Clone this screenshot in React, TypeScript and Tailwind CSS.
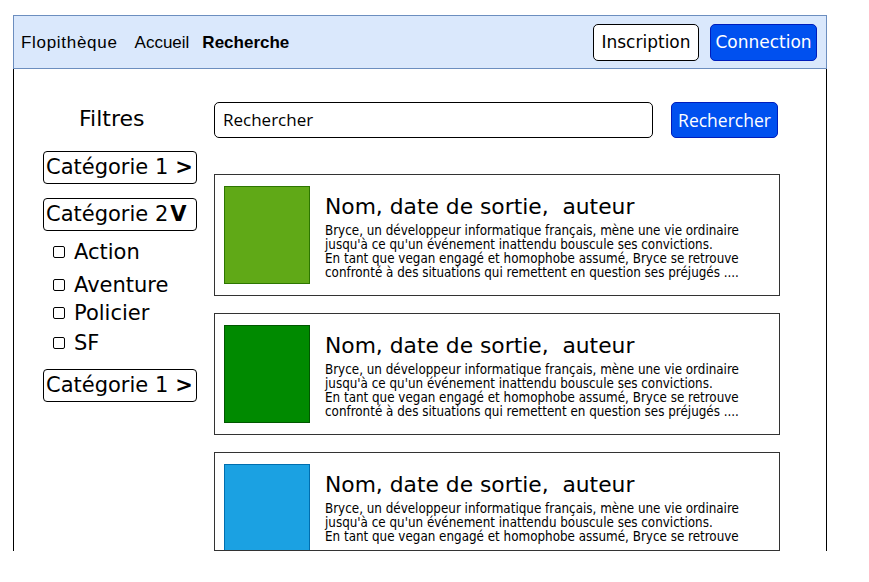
const desc = [
  "Bryce, un développeur informatique français, mène une vie ordinaire",
  "jusqu'à ce qu'un événement inattendu bouscule ses convictions.",
  "En tant que vegan engagé et homophobe assumé, Bryce se retrouve",
  "confronté à des situations qui remettent en question ses préjugés ....",
];

const books = [
  { color: "bg-[#60a917] border-[#2d7600]", h: "h-[122px]", lines: 4 },
  { color: "bg-[#008a00] border-[#005700]", h: "h-[122px]", lines: 4 },
  { color: "bg-[#1ba1e2] border-[#006eaf]", h: "h-[99px]", lines: 3 },
];

function CategoryButton({ label, open }: { label: string; open?: boolean }) {
  return (
    <div className="flex h-[33px] w-[154px] items-center rounded-[4px] border border-black bg-white pl-[2px] text-[21px] leading-none text-black">
      <span>{label}</span>
      <span className={open ? "ml-[2px] font-bold" : "ml-[7px] font-bold"}>{open ? "V" : ">"}</span>
    </div>
  );
}

function Check({ label, className }: { label: string; className?: string }) {
  return (
    <div className={"flex items-center pl-[10px] text-[21px] leading-none " + (className ?? "")}>
      <span className="mr-[9px] h-[12px] w-[12px] rounded-[2px] border border-black bg-white" />
      <span>{label}</span>
    </div>
  );
}

function BookCard({ color, h, lines }: { color: string; h: string; lines: number }) {
  return (
    <div className={"flex w-[566px] shrink-0 overflow-hidden border border-[#333] bg-white pl-[9px] pt-[11px] " + h}>
      <div className={"h-[98px] w-[86px] shrink-0 border " + color} />
      <div className="ml-[15px] pt-[9px]">
        <p className="whitespace-pre text-[21.8px] leading-[24px] text-black">{"Nom, date de sortie,  auteur"}</p>
        <div className="mt-[5px] font-['DejaVu_Sans_Condensed','DejaVu_Sans',sans-serif] text-[13.3px] leading-[14px] text-black">
          {desc.slice(0, lines).map((d) => (
            <p key={d} className="whitespace-nowrap">{d}</p>
          ))}
        </div>
      </div>
    </div>
  );
}

export default function App() {
  return (
    <div className="h-[582px] w-[869px] overflow-hidden bg-white font-['DejaVu_Sans',sans-serif]">
      <div className="ml-[13px] mt-[15px] flex h-[536px] w-[814px] flex-col overflow-hidden">
        <header className="flex h-[54px] shrink-0 items-center border border-[#6c8ebf] bg-[#dae8fc] pl-[7px] pr-[9px]">
          <nav className="flex items-center pt-[2px] font-['Liberation_Sans',Arial,sans-serif] text-[17px] text-black">
            <span className="tracking-[0.7px]">Flopithèque</span>
            <span className="ml-[17px]">Accueil</span>
            <span className="ml-[13px] font-bold">Recherche</span>
          </nav>
          <div className="ml-auto flex items-center gap-[11px] pt-[1px]">
            <button className="h-[37px] w-[106px] rounded-[5px] border border-black bg-white text-[17px] text-black">
              Inscription
            </button>
            <button className="h-[37px] w-[107px] rounded-[5px] border border-[#001dbc] bg-[#0050ef] text-[17px] text-white">
              Connection
            </button>
          </div>
        </header>
        <main className="flex flex-1 border-x border-b border-x-black border-b-[#333] pl-[29px] pt-[33px]">
          <aside className="flex w-[154px] shrink-0 flex-col">
            <p className="pl-[36px] pt-[5px] text-[22px] leading-[24px] text-black">Filtres</p>
            <div className="mt-[20px] flex flex-col gap-[14px]">
              <CategoryButton label="Catégorie 1" />
              <CategoryButton label="Catégorie 2" open />
            </div>
            <Check label="Action" className="mt-[10px] h-[22px]" />
            <Check label="Aventure" className="mt-[11px] h-[22px]" />
            <Check label="Policier" className="mt-[6px] h-[22px]" />
            <Check label="SF" className="mt-[8px] h-[22px]" />
            <div className="mt-[15px]">
              <CategoryButton label="Catégorie 1" />
            </div>
          </aside>
          <section className="ml-[17px] flex flex-col">
            <div className="flex items-center gap-[18px]">
              <div className="flex h-[36px] w-[439px] items-center rounded-[5px] border border-black bg-white pl-[8px] font-['Open_Sans',sans-serif] text-[17px] text-black">
                Rechercher
              </div>
              <button className="h-[36px] w-[107px] rounded-[5px] border border-[#001dbc] bg-[#0050ef] font-['Open_Sans',sans-serif] text-[17.5px] text-white">
                Rechercher
              </button>
            </div>
            <div className="mt-[36px] flex flex-col gap-[17px]">
              {books.map((b, i) => (
                <BookCard key={i} color={b.color} h={b.h} lines={b.lines} />
              ))}
            </div>
          </section>
        </main>
      </div>
    </div>
  );
}
